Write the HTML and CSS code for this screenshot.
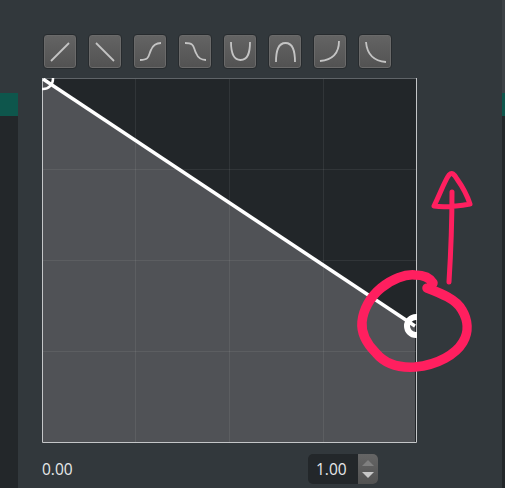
FILE: index.html
```html
<!DOCTYPE html>
<html lang="en">
<head>
<meta charset="utf-8">
<title>Curve editor</title>
<link rel="stylesheet" href="styles.css">
</head>
<body>
<div class="app">
  <aside class="side side-left"><div class="tab"></div><div class="side-fill"></div></aside>
  <main class="editor">
    <div class="presets">
      <button class="preset"><svg class="glyph" viewBox="0 0 34 35"><path d="M8 27L26 9"/></svg></button>
      <button class="preset"><svg class="glyph" viewBox="0 0 34 35"><path d="M8 9L26 27"/></svg></button>
      <button class="preset"><svg class="glyph" viewBox="0 0 34 35"><path d="M7 26C17 26 15 22 18 16C20 11 24 9 28 9"/></svg></button>
      <button class="preset"><svg class="glyph" viewBox="0 0 34 35"><path d="M7 9C17 9 15 13 18 19C20 24 24 26 28 26"/></svg></button>
      <button class="preset"><svg class="glyph" viewBox="0 0 34 35"><path d="M8 8C8 19 10 26 17.5 26C25 26 27 19 27 8"/></svg></button>
      <button class="preset"><svg class="glyph" viewBox="0 0 34 35"><path d="M8 28C8 17 10 9 17.5 9C25 9 27 17 27 28"/></svg></button>
      <button class="preset"><svg class="glyph" viewBox="0 0 34 35"><path d="M7 27C18 26 26 20 26 7"/></svg></button>
      <button class="preset"><svg class="glyph" viewBox="0 0 34 35"><path d="M8 8C9 20 16 27 28 28"/></svg></button>
    </div>
    <svg class="graph" width="375" height="365" viewBox="0 0 375 365">
      <rect class="graph-bg" width="375" height="365"/>
      <path class="graph-area" d="M1 1L373 248V364H1Z"/>
      <path class="grid" d="M93.5 0V365M187.5 0V365M281.5 0V365M0 91.5H375M0 182.5H375M0 273.5H375"/>
      <path class="frame-top" d="M0 .5H375"/>
      <path class="frame" d="M.5 0V364.5H374.5V0"/>
      <path class="curve" d="M1 1L373 248"/>
      <circle class="handle-start" cx="1" cy="1" r="10"/>
      <circle class="handle-end" cx="374" cy="248" r="9"/>
    </svg>
    <div class="footer">
      <span class="value">0.00</span>
      <div class="spin">
        <span class="value spin-value">1.00</span>
        <div class="spin-buttons">
          <svg class="arrows" width="20" height="30" viewBox="0 0 20 30"><path class="arrow-up" d="M4 12L10 6L16 12Z"/><path class="arrow-down" d="M4 18H16L10 24Z"/></svg>
        </div>
      </div>
    </div>
  </main>
  <aside class="side side-right"><div class="tab"></div><div class="side-fill"></div></aside>
</div>
<svg class="ink" width="505" height="488" viewBox="0 0 505 488">
  <path class="ink-circle" d="M427 288C440 293 456 299 462 310C468 320 469 332 463 342C456 354 438 365 415 367C398 368 385 364 376 353C366 343 361 333 362 322C363 310 370 297 381 288C392 279 405 274 415 275C424 275 430 278 433 283"/>
  <path class="ink-arrow" d="M449 282C451 250 452 222 452 192M434 206C440 194 445 180 449 175C452 172 454 174 457 179C462 186 467 195 470 204C459 206 446 208 434 206Z"/>
</svg>
</body>
</html>
```
FILE: styles.css
```css
* { box-sizing: border-box; }
html, body { margin: 0; padding: 0; }
body {
  width: 505px;
  height: 488px;
  overflow: hidden;
  position: relative;
  background: #32383c;
  font-family: "Open Sans", "Liberation Sans", sans-serif;
}
.app { display: flex; height: 488px; }
.side { display: flex; flex-direction: column; flex: none; padding-top: 93px; }
.side-left { width: 18px; }
.side-right {
  width: 3px;
  margin-left: auto;
  background: #3d4246;
}
.tab { height: 23px; background: #0e564c; flex: none; }
.side-fill { flex: 1; background: #23272a; }
.editor { width: 482px; padding: 34px 0 0 24px; display: flex; flex-direction: column; }
.presets { display: flex; gap: 11px; height: 35px; padding-left: 1px; margin-bottom: 9px; }
.preset {
  width: 34px;
  height: 35px;
  padding: 0;
  border: 1px solid #272b2e;
  border-radius: 4px;
  background: linear-gradient(#646464, #525252);
  box-shadow: inset 0 0 0 1px #6a6a6a;
  display: block;
}
.glyph { display: block; width: 34px; height: 35px; margin: -1px; fill: none; stroke: #c4c4c4; stroke-width: 1.8; stroke-linecap: butt; }
.graph { display: block; flex: none; }
.graph-bg { fill: #222629; }
.graph-area { fill: #505256; }
.grid { fill: none; stroke: #ffffff; stroke-opacity: .07; stroke-width: 1; }
.frame-top { fill: none; stroke: #5f6468; }
.frame { fill: none; stroke: #c4c6c8; stroke-width: 1; }
.curve { stroke: #ffffff; stroke-width: 3.5; fill: none; }
.handle-start { fill: none; stroke: #ffffff; stroke-width: 2.5; }
.handle-end { fill: none; stroke: #ffffff; stroke-width: 6; }
.footer { display: flex; justify-content: space-between; align-items: center; width: 336px; height: 30px; margin-top: 11px; }
.value { color: #e6e8ea; font-size: 15.5px; line-height: 30px; }
.spin { display: flex; width: 70px; height: 30px; border-radius: 5px; background: #23272a; overflow: hidden; }
.spin-value { flex: 1; padding-left: 8px; }
.spin-buttons { width: 20px; background: linear-gradient(#656565, #525252); }
.arrows { display: block; }
.arrow-up { fill: #7f7f7f; }
.arrow-down { fill: #c8c8c8; }
.ink { position: absolute; left: 0; top: 0; pointer-events: none; fill: none; stroke: #ff1f5f; stroke-linecap: round; stroke-linejoin: round; }
.ink-circle { stroke-width: 9.5; }
.ink-arrow { stroke-width: 5; }
```
